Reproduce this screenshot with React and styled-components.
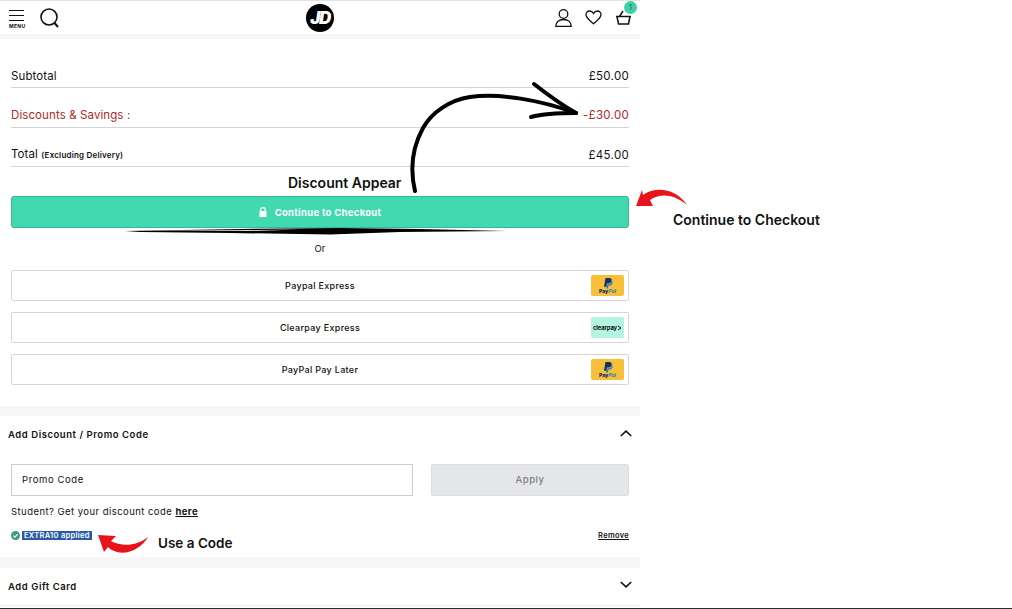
import React from "react";
import styled, { createGlobalStyle } from "styled-components";

const GlobalStyle = createGlobalStyle`
  html, body {
    margin: 0;
    padding: 0;
    background: #fff;
  }
  * {
    box-sizing: border-box;
  }
  body {
    font-family: "Inter", "Liberation Sans", sans-serif;
    color: #111;
  }
`;

const PayPalBadge = () => (
  <Badge $bg="#f8bf38">
    <svg width="10" height="11" viewBox="0 0 10 11">
      <path d="M2.500 0h3.600c2 0 3 1 2.600 2.800C8.300 4.700 7 5.600 5.200 5.600H4L3.400 8.800H1z" fill="#12316f" />
      <path d="M8.800 2.800c.8.600.9 1.500.6 2.500-.4 1.500-1.500 2.300-3.100 2.300h-.9L5 10.500H3.200l.4-2.200 1-2.100h1.400c1.500 0 2.500-.9 2.800-3.400z" fill="#1f7fc4" />
    </svg>
    <BadgeText>
      <b>Pay</b>
      <i>Pal</i>
    </BadgeText>
  </Badge>
);

const ClearpayBadge = () => (
  <Badge $bg="#b4f5e1">
    <ClearText>clearpay</ClearText>
    <svg width="5" height="6" viewBox="0 0 5 6" fill="none" stroke="#111" strokeWidth="1">
      <path d="M1 1l3 2-3 2" />
    </svg>
  </Badge>
);

const Row = ({ children, amount, danger, first }) => (
  <SummaryRow $danger={danger} $first={first}>
    <span>{children}</span>
    <Amount>{amount}</Amount>
  </SummaryRow>
);

const PayOption = ({ label, children }) => (
  <PayRow>
    <PayLabel>{label}</PayLabel>
    {children}
  </PayRow>
);

const Annotations = () => (
  <Overlay width="1012" height="609" viewBox="0 0 1012 609">
    {/* hand drawn arrow to the discount */}
    <g fill="none" stroke="#000" strokeLinecap="round" strokeLinejoin="round">
      <path d="M415 191C410 170 411 150 423 128C432 112 450 100 470 97C500 93 540 100 576 113" strokeWidth="4" />
      <path d="M534 84C548 95 562 105 576 113" strokeWidth="4" />
      <path d="M531 117C546 113 561 113 576 113" strokeWidth="4" />
    </g>
    {/* brush stroke under the button */}
    <path d="M125 231L240 229L340 228L420 229L507 231L400 232L330 234.500L230 233L140 232z" fill="#000" />
    <path d="M135 230.500L250 230L300 229.500L250 231z" fill="#ddd" />
    {/* red arrow to the button */}
    <path
      d="M636 206L642 190L643 195C655 186 676 188 687 205C674 194 660 193 650 200L653 206z"
      fill="#e8131b"
    />
    {/* red arrow to the code */}
    <path
      d="M98 535L116 536L111 541C122 547 137 546 148 537C142 548 128 555 117 552C113 551 110 549 108 547L104 552z"
      fill="#e8131b"
    />
  </Overlay>
);

export default function App() {
  return (
    <Page>
      <GlobalStyle />
      <Column>
        <Header>
          <HeaderSide>
            <MenuButton>
              <MenuBar />
              <MenuBar />
              <MenuBar />
              <MenuLabel>MENU</MenuLabel>
            </MenuButton>
            <svg width="22" height="22" viewBox="0 0 22 22" fill="none" stroke="#111" strokeWidth="1.600">
              <circle cx="10" cy="10" r="8" />
              <path d="M15.500 16l3.500 4" strokeWidth="2" />
            </svg>
          </HeaderSide>
          <Logo>JD</Logo>
          <HeaderIcons>
            <svg width="18" height="18" viewBox="-1 0 18 18" fill="none" stroke="#111" strokeWidth="1.300">
              <circle cx="8.500" cy="5" r="4.300" />
              <path d="M.8 17.300c0-4.600 3.400-6.800 7.700-6.800s7.700 2.200 7.700 6.800z" />
            </svg>
            <svg width="17" height="15" viewBox="0 0 17 15" fill="none" stroke="#111" strokeWidth="1.300">
              <path d="M8.500 13.800C4 10 1 7.800 1 4.800 1 2.600 2.700 1 4.600 1c1.700 0 3 .8 3.900 2.400C9.400 1.800 10.700 1 12.400 1 14.300 1 16 2.600 16 4.800c0 3-3 5.200-7.500 9z" />
            </svg>
            <Basket>
              <svg width="17" height="15" viewBox="0 0 17 15" fill="none" stroke="#111" strokeWidth="1.500">
                <path d="M1 6.500h15M2 6.500l1.500 7.500h10l1.500-7.500M4.500 6.500L8 1" />
              </svg>
              <BasketCount>1</BasketCount>
            </Basket>
          </HeaderIcons>
        </Header>
        <Band $height={5} />
        <Summary>
          <Row amount="£50.00" first>Subtotal</Row>
          <Row amount="-£30.00" danger>
            Discounts &amp; Savings :
          </Row>
          <Row amount="£45.00">
            <span>Total</span> <TotalNote>(Excluding Delivery)</TotalNote>
          </Row>
        </Summary>
        <Checkout>
          <CheckoutButton>
            <svg width="8" height="10" viewBox="0 0 8 10" fill="#fff">
              <path d="M1 4V3a3 3 0 0 1 6 0v1h.5v6H.5V4zm1.200 0h3.600V3a1.800 1.800 0 0 0-3.600 0z" />
            </svg>
            Continue to Checkout
          </CheckoutButton>
          <OrLabel>Or</OrLabel>
          <PayList>
            <PayOption label="Paypal Express">
              <PayPalBadge />
            </PayOption>
            <PayOption label="Clearpay Express">
              <ClearpayBadge />
            </PayOption>
            <PayOption label="PayPal Pay Later">
              <PayPalBadge />
            </PayOption>
          </PayList>
        </Checkout>
        <Band $height={10} />
        <AccordionHead $height={37}>
          Add Discount / Promo Code
          <svg width="12" height="7" viewBox="0 0 12 7" fill="none" stroke="#111" strokeWidth="1.600">
            <path d="M.8 6L6 1.200 11.200 6" />
          </svg>
        </AccordionHead>
        <PromoBody>
          <PromoRow>
            <PromoInput>Promo Code</PromoInput>
            <ApplyButton>Apply</ApplyButton>
          </PromoRow>
          <StudentLine>
            Student? Get your discount code <StudentLink>here</StudentLink>
          </StudentLine>
          <AppliedRow>
            <AppliedCode>
              <svg width="9" height="9" viewBox="0 0 9 9">
                <circle cx="4.500" cy="4.500" r="4.500" fill="#3c9c82" />
                <path d="M2.300 4.600l1.500 1.500 3-3" fill="none" stroke="#fff" strokeWidth="1.100" />
              </svg>
              <AppliedText>EXTRA10 applied</AppliedText>
            </AppliedCode>
            <RemoveLink>Remove</RemoveLink>
          </AppliedRow>
        </PromoBody>
        <Band $height={11} />
        <AccordionHead $height={36}>
          Add Gift Card
          <svg width="12" height="7" viewBox="0 0 12 7" fill="none" stroke="#111" strokeWidth="1.600">
            <path d="M.8 1L6 5.800 11.200 1" />
          </svg>
        </AccordionHead>
        <Band $height={3} />
      </Column>
      <BottomEdge />
      <Annotations />
      <Note $left={288} $top={175}>Discount Appear</Note>
      <Note $left={673} $top={212}>Continue to Checkout</Note>
      <Note $left={158} $top={535} $size={13.5}>Use a Code</Note>
    </Page>
  );
}

const Page = styled.div`
  position: relative;
  width: 1012px;
  height: 609px;
  overflow: hidden;
  background: #fff;
`;

const Column = styled.main`
  width: 640px;
  display: flex;
  flex-direction: column;
`;

const Header = styled.header`
  height: 34px;
  border-top: 1px solid #e2e2e2;
  display: grid;
  grid-template-columns: 1fr auto 1fr;
  align-items: center;
  padding: 0 9px;
`;

const HeaderSide = styled.div`
  display: flex;
  align-items: center;
  gap: 15px;
`;

const MenuButton = styled.div`
  width: 15px;
  display: flex;
  flex-direction: column;
  gap: 4px;
  margin-top: 3px;
`;

const MenuBar = styled.span`
  display: block;
  height: 1px;
  background: #111;
`;

const MenuLabel = styled.span`
  margin-top: -2px;
  font-size: 5px;
  line-height: 6px;
  font-weight: 700;
  text-align: center;
  letter-spacing: 0.300px;
`;

const Logo = styled.div`
  width: 28px;
  height: 28px;
  border-radius: 50%;
  background: #000;
  color: #fff;
  font-size: 17px;
  font-weight: 900;
  font-style: italic;
  letter-spacing: -1.500px;
  display: flex;
  align-items: center;
  justify-content: center;
`;

const HeaderIcons = styled.div`
  display: flex;
  align-items: center;
  justify-content: flex-end;
  gap: 13px;
  margin-right: -1px;
`;

const Basket = styled.div`
  position: relative;
  display: flex;
`;

const BasketCount = styled.span`
  position: absolute;
  top: -9px;
  right: -5px;
  width: 13px;
  height: 13px;
  border-radius: 50%;
  background: #3fcfa8;
  color: #14584a;
  font-size: 7px;
  line-height: 13px;
  text-align: center;
`;

const Band = styled.div`
  height: ${({ $height }) => $height}px;
  background: #f6f6f6;
`;

const Summary = styled.section`
  padding: 0 11px;
  display: flex;
  flex-direction: column;
`;

const SummaryRow = styled.div`
  height: ${({ $first }) => ($first ? 49 : 39.500)}px;
  display: flex;
  align-items: flex-end;
  justify-content: space-between;
  border-bottom: 1px solid #d4d4d4;
  font-size: 11.500px;
  line-height: 14px;
  letter-spacing: 0.100px;
  padding-bottom: 4.500px;
  color: ${({ $danger }) => ($danger ? "#ab2a2e" : "#111")};
`;

const Amount = styled.span`
  letter-spacing: 0.300px;
`;

const TotalNote = styled.span`
  font-size: 8px;
  font-weight: 600;
  letter-spacing: 0.200px;
`;

const Checkout = styled.section`
  padding: 29px 11px 21px;
  display: flex;
  flex-direction: column;
`;

const CheckoutButton = styled.div`
  height: 32px;
  border-radius: 3px;
  border: 1px solid #37b897;
  background: #42d8b0;
  color: #fff;
  font-size: 9.500px;
  font-weight: 700;
  letter-spacing: 0.300px;
  display: flex;
  align-items: center;
  justify-content: center;
  gap: 8px;
`;

const OrLabel = styled.div`
  height: 42px;
  padding-bottom: 2px;
  display: flex;
  align-items: center;
  justify-content: center;
  font-size: 9.500px;
`;

const PayList = styled.div`
  display: flex;
  flex-direction: column;
  gap: 11px;
`;

const PayRow = styled.div`
  position: relative;
  height: 31px;
  border: 1px solid #d6d6d6;
  border-radius: 2px;
  display: flex;
  align-items: center;
  justify-content: flex-end;
  padding-right: 4px;
`;

const PayLabel = styled.span`
  position: absolute;
  left: 0;
  right: 0;
  text-align: center;
  font-size: 9px;
  font-weight: 500;
  letter-spacing: 0.300px;
`;

const Badge = styled.div`
  width: 33px;
  height: 21px;
  border-radius: 2px;
  background: ${({ $bg }) => $bg};
  display: flex;
  flex-wrap: wrap;
  align-items: center;
  align-content: center;
  justify-content: center;
`;

const BadgeText = styled.span`
  width: 100%;
  text-align: center;
  font-size: 5px;
  line-height: 5px;
  font-weight: 700;
  color: #12316f;
  i {
    color: #1f7fc4;
  }
`;

const ClearText = styled.span`
  font-size: 6px;
  font-weight: 700;
  letter-spacing: -0.200px;
  color: #111;
`;

const AccordionHead = styled.div`
  height: ${({ $height }) => $height}px;
  padding: 0 8px;
  display: flex;
  align-items: center;
  justify-content: space-between;
  font-size: 9.500px;
  font-weight: 600;
  letter-spacing: 0.550px;
  svg {
    margin-bottom: 3px;
  }
`;

const PromoBody = styled.section`
  padding: 11px 11px 0;
  height: 104px;
`;

const PromoRow = styled.div`
  display: flex;
  gap: 18px;
`;

const PromoInput = styled.div`
  width: 402px;
  height: 32px;
  border: 1px solid #cfcfcf;
  padding: 0 10px 2px;
  display: flex;
  align-items: center;
  font-size: 9.500px;
  font-weight: 400;
  letter-spacing: 0.600px;
`;

const ApplyButton = styled.div`
  flex: 1;
  height: 32px;
  padding-bottom: 1px;
  border-radius: 2px;
  background: #e5e6e7;
  border: 1px solid #dcdddd;
  color: #7d7f81;
  font-size: 9.500px;
  font-weight: 500;
  letter-spacing: 0.500px;
  display: flex;
  align-items: center;
  justify-content: center;
`;

const StudentLine = styled.div`
  margin-top: 10px;
  font-size: 9.500px;
  font-weight: 400;
  line-height: 12px;
  letter-spacing: 0.450px;
`;

const StudentLink = styled.span`
  font-weight: 700;
  text-decoration: underline;
`;

const AppliedRow = styled.div`
  margin-top: 13px;
  display: flex;
  align-items: center;
  justify-content: space-between;
`;

const AppliedCode = styled.div`
  display: flex;
  align-items: center;
  gap: 2px;
`;

const AppliedText = styled.span`
  background: #2a5ba8;
  color: #fff;
  font-size: 7.500px;
  font-weight: 600;
  line-height: 9px;
  letter-spacing: 0.300px;
  padding: 0 2px;
`;

const RemoveLink = styled.span`
  font-size: 7.500px;
  font-weight: 600;
  letter-spacing: 0.300px;
  text-decoration: underline;
`;

const BottomEdge = styled.div`
  position: absolute;
  left: 0;
  right: 0;
  bottom: 0;
  height: 1px;
  background: #2b2b2b;
`;

const Overlay = styled.svg`
  position: absolute;
  inset: 0;
  pointer-events: none;
`;

const Note = styled.span`
  position: absolute;
  left: ${({ $left }) => $left}px;
  top: ${({ $top }) => $top}px;
  font-size: ${({ $size }) => $size || 14}px;
  line-height: 16px;
  font-weight: 600;
  color: #111;
  white-space: nowrap;
`;
